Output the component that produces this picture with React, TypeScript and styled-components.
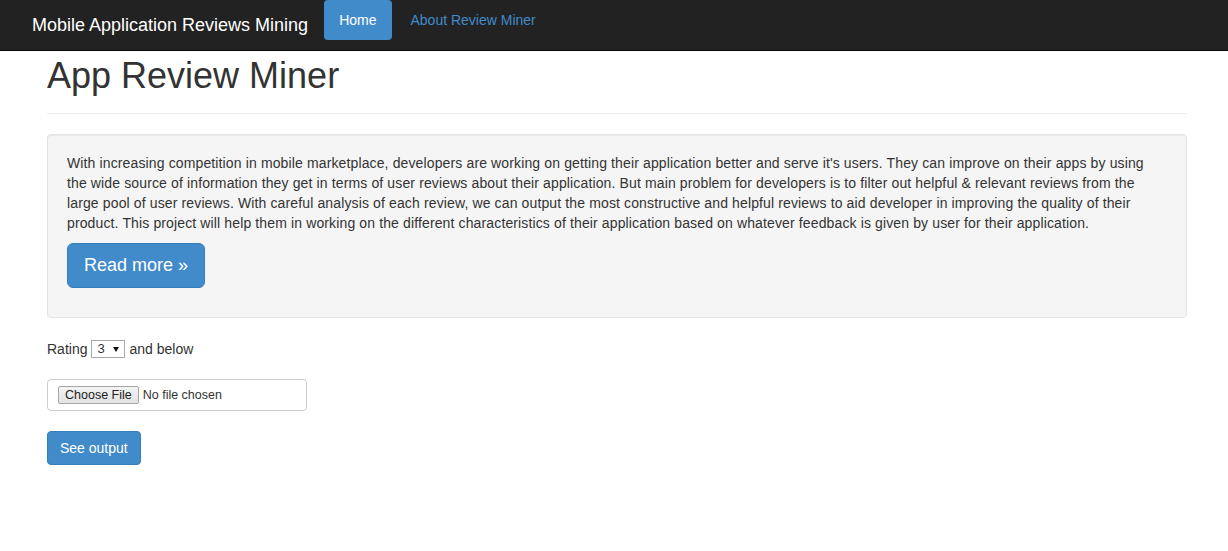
import React from "react";
import styled, { createGlobalStyle } from "styled-components";

const Global = createGlobalStyle`
  html, body { margin: 0; padding: 0; background: #fff; }
  body {
    font-family: "Liberation Sans", Arial, sans-serif;
    font-size: 14px;
    line-height: 20px;
    color: #333;
  }
  * { box-sizing: border-box; }
`;

const Navbar = styled.nav`
  height: 51px;
  background: #222;
  border-bottom: 1px solid #080808;
  display: flex;
  align-items: flex-start;
  padding-left: 32px;
`;

const Brand = styled.a`
  color: #fff;
  font-size: 18px;
  line-height: 20px;
  padding: 15px 0;
  margin-right: 14px;
  text-decoration: none;
`;

const Pills = styled.ul`
  list-style: none;
  margin: 0;
  padding: 0;
  display: flex;
`;

const Pill = styled.li<{ $active?: boolean }>`
  margin: 0 2px;
  a {
    display: block;
    padding: 10px 15px;
    line-height: 20px;
    font-size: 14px;
    border-radius: 4px;
    text-decoration: none;
    color: ${(p) => (p.$active ? "#fff" : "#428bca")};
    background: ${(p) => (p.$active ? "#428bca" : "transparent")};
  }
`;

const Container = styled.main`
  width: 1140px;
  margin-left: 47px;
`;

const PageHeader = styled.div`
  padding-bottom: 8px;
  margin: 0 0 20px;
  border-bottom: 1px solid #eee;
`;

const Title = styled.h1`
  font-family: "Liberation Sans", Arial, sans-serif;
  font-weight: 500;
  font-size: 36px;
  line-height: 1.1;
  margin: 5px 0 9px;
  color: #333;
`;

const Well = styled.div`
  background: #f5f5f5;
  border: 1px solid #e3e3e3;
  border-radius: 4px;
  padding: 18px 19px 19px;
  box-shadow: inset 0 1px 1px rgba(0, 0, 0, 0.05);
  margin-bottom: 20px;
`;

const Para = styled.p`
  margin: 0 0 10px;
  letter-spacing: 0.13px;
`;

const Button = styled.a<{ $lg?: boolean }>`
  display: inline-block;
  background: #428bca;
  border: 1px solid #357ebd;
  color: #fff;
  text-decoration: none;
  font-size: ${(p) => (p.$lg ? "18px" : "14px")};
  line-height: ${(p) => (p.$lg ? "23px" : "20px")};
  padding: ${(p) => (p.$lg ? "10px 16px" : "6px 12px")};
  border-radius: ${(p) => (p.$lg ? "6px" : "4px")};
  margin-bottom: ${(p) => (p.$lg ? "10px" : "0")};
`;

const RatingRow = styled.div`
  display: flex;
  align-items: center;
  gap: 4px;
  height: 22px;
  margin-bottom: 19px;
`;

const SelectWrap = styled.span`
  position: relative;
  display: inline-block;
  &::after {
    content: "";
    position: absolute;
    right: 6px;
    top: 7px;
    border-left: 3.5px solid transparent;
    border-right: 3.5px solid transparent;
    border-top: 5px solid #111;
    pointer-events: none;
  }
`;

const Select = styled.select`
  appearance: none;
  -webkit-appearance: none;
  display: block;
  font-family: "Liberation Sans", Arial, sans-serif;
  font-size: 13px;
  line-height: 16px;
  height: 18px;
  width: 34px;
  padding: 0 0 0 5px;
  border: 1px solid #a9a9a9;
  border-radius: 0;
  background: #fff;
  color: #333;
`;

const FileBox = styled.div`
  width: 260px;
  height: 32px;
  border: 1px solid #ccc;
  border-radius: 4px;
  display: flex;
  align-items: center;
  padding-left: 10px;
  margin-bottom: 20px;
  input {
    font-family: "Liberation Sans", Arial, sans-serif;
    font-size: 12.5px;
    color: #333;
  }
  input::file-selector-button {
    font-family: "Liberation Sans", Arial, sans-serif;
    font-size: 12.5px;
    padding: 1px 6px;
    margin-right: 4px;
    border: 1px solid #a6a6a6;
    border-radius: 2px;
    background: linear-gradient(#f4f4f4, #e2e2e2);
    color: #222;
  }
`;

export default function App() {
  return (
    <>
      <Global />
      <Navbar>
        <Brand href="#">Mobile Application Reviews Mining</Brand>
        <Pills>
          <Pill $active>
            <a href="#">Home</a>
          </Pill>
          <Pill>
            <a href="#">About Review Miner</a>
          </Pill>
        </Pills>
      </Navbar>
      <Container>
        <PageHeader>
          <Title>App Review Miner</Title>
        </PageHeader>
        <Well>
          <Para>
            With increasing competition in mobile marketplace, developers are working on getting their application better and serve it's users. They can improve on their apps by using the wide source of information they get in terms of user reviews about their application. But main problem for developers is to filter out helpful &amp; relevant reviews from the large pool of user reviews. With careful analysis of each review, we can output the most constructive and helpful reviews to aid developer in improving the quality of their product. This project will help them in working on the different characteristics of their application based on whatever feedback is given by user for their application.
          </Para>
          <Button $lg href="#">
            Read more »
          </Button>
        </Well>
        <RatingRow>
          <span>Rating</span>
          <SelectWrap>
            <Select defaultValue="3">
              <option>1</option>
              <option>2</option>
              <option>3</option>
              <option>4</option>
              <option>5</option>
            </Select>
          </SelectWrap>
          <span>and below</span>
        </RatingRow>
        <FileBox>
          <input type="file" />
        </FileBox>
        <Button href="#">See output</Button>
      </Container>
    </>
  );
}
